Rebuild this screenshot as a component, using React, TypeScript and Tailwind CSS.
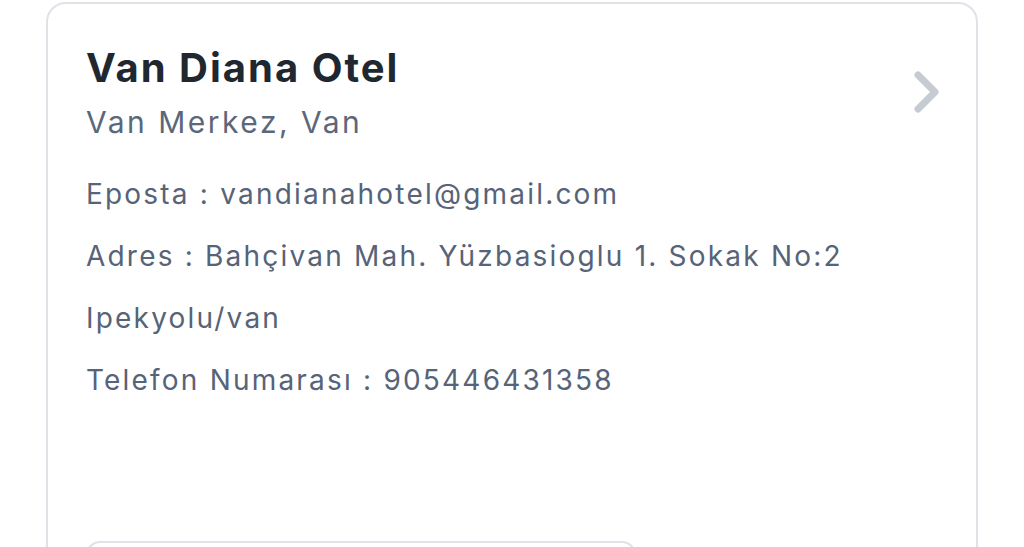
const hotel = {
  name: "Van Diana Otel",
  location: "Van Merkez, Van",
  email: "vandianahotel@gmail.com",
  address: ["Bahçivan Mah. Yüzbasioglu 1. Sokak No:2", "Ipekyolu/van"],
  phone: "905446431358",
};

function Chevron() {
  return (
    <svg width="34" height="50" viewBox="0 0 34 50" fill="none" className="shrink-0">
      <polyline
        points="8,8 25,25 8,42"
        stroke="#c6cbd2"
        strokeWidth="7"
        strokeLinecap="round"
        strokeLinejoin="round"
      />
    </svg>
  );
}

export default function App() {
  return (
    <div
      className="h-[547px] w-[1024px] overflow-hidden bg-white pt-[2px] pl-[46px]"
      style={{ fontFamily: "Inter, 'Noto Sans', sans-serif" }}
    >
      <div className="w-[932px] h-[600px] rounded-[20px] border-2 border-[#dfe2e6] px-[38px] pt-[38px]">
        <div className="flex items-start justify-between">
          <div>
            <h1 className="text-[40px] leading-[52px] font-bold tracking-[2px] text-[#1f2731]">{hotel.name}</h1>
            <p className="mt-[8px] text-[30px] leading-[40px] tracking-[2.5px] text-[#5b677a]">{hotel.location}</p>
          </div>
          <div className="mt-[25px] -mr-[6px]">
            <Chevron />
          </div>
        </div>
        <div className="mt-[21px] text-[28px] leading-[62px] tracking-[2.2px] text-[#566378] whitespace-nowrap">
          <p>Eposta : {hotel.email}</p>
          <p>Adres : {hotel.address[0]}</p>
          <p>{hotel.address[1]}</p>
          <p>Telefon Numarası : {hotel.phone}</p>
        </div>
        <div className="mt-[130px] w-[550px] h-[60px] rounded-[14px] border-2 border-[#dfe2e6]" />
      </div>
    </div>
  );
}
